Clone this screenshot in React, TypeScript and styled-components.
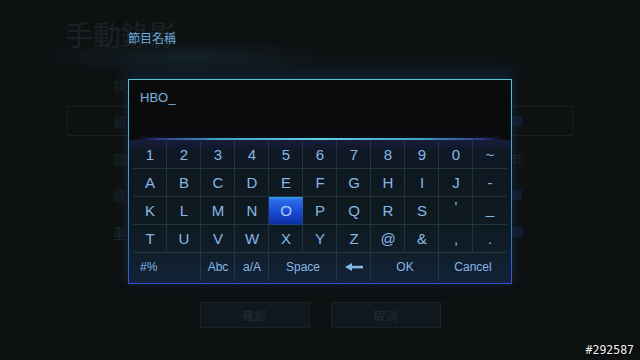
import React from "react";
import styled, { createGlobalStyle } from "styled-components";

const Global = createGlobalStyle`
  html, body { margin: 0; padding: 0; background: #0e1112; }
  * { box-sizing: border-box; }
`;

const Page = styled.div`
  position: relative;
  width: 640px;
  height: 360px;
  overflow: hidden;
  background:
    radial-gradient(ellipse 150px 16px at 190px 57px, rgba(28, 58, 78, 0.4), transparent),
    #0e1112;
  font-family: "Liberation Sans", "Noto Sans CJK TC", Arial, sans-serif;
`;

/* ---------- dimmed form behind the dialog ---------- */
const Form = styled.div`
  display: flex;
  flex-direction: column;
  padding: 18px 0 0 65px;
`;

const PageTitle = styled.div`
  display: flex;
  align-items: flex-end;
  gap: 6px;
  height: 32px;
  font-family: "Noto Sans CJK TC", sans-serif;
  font-size: 28px;
  line-height: 32px;
  color: #1b2224;
`;

const Dots = styled.span`
  font-size: 12px;
  line-height: 18px;
  letter-spacing: 6px;
  color: #182022;
`;

const Rows = styled.div`
  display: flex;
  flex-direction: column;
  gap: 7px;
  margin-top: 19px;
  margin-left: 2px;
  width: 506px;
`;

const Row = styled.div<{ $boxed?: boolean }>`
  display: flex;
  align-items: center;
  justify-content: space-between;
  height: 30px;
  padding: 0 50px 0 45px;
  border: 1px solid ${(p) => (p.$boxed ? "#1a2022" : "transparent")};
`;

const RowLabel = styled.span`
  font-family: "Noto Sans CJK TC", sans-serif;
  font-size: 13px;
  color: #1d2426;
`;

const RowField = styled.span`
  display: block;
  width: 60px;
  height: 10px;
  background: #121d30;
`;

const RowText = styled.span`
  font-family: "Noto Sans CJK TC", sans-serif;
  font-size: 10px;
  color: #222a2c;
`;

const Buttons = styled.div`
  display: flex;
  justify-content: center;
  gap: 21px;
  margin-top: 55px;
  margin-left: -65px;
  width: 640px;
`;

const DimButton = styled.div`
  width: 110px;
  height: 26px;
  display: flex;
  align-items: center;
  justify-content: center;
  background: #11181d;
  border: 1px solid #192226;
  font-family: "Noto Sans CJK TC", sans-serif;
  font-size: 12px;
  color: #202c33;
`;

/* ---------- dialog ---------- */
const DialogWrap = styled.div`
  position: absolute;
  left: 128px;
  top: 30px;
  width: 384px;
  display: flex;
  flex-direction: column;
`;

const DialogTitle = styled.div`
  height: 16px;
  font-family: "Noto Sans CJK TC", sans-serif;
  font-size: 12px;
  line-height: 16px;
  color: #6aa9de;
  margin-bottom: 33px;
`;

const Box = styled.div`
  display: flex;
  flex-direction: column;
  height: 205px;
  border: 1px solid;
  border-image: linear-gradient(180deg, #56c3cf 0%, #45a2c6 40%, #3552cc 100%) 1;
  background: #0a0b0c;
  box-shadow: 0 -8px 14px 2px rgba(20, 44, 66, 0.55), 0 0 6px rgba(30, 60, 90, 0.4);
`;

const InputArea = styled.div`
  height: 58px;
  padding: 10px 11px 0;
  font-size: 13px;
  line-height: 16px;
  color: #80b2de;
`;

const Separator = styled.div`
  height: 2px;
  margin: 0 8px;
  background: linear-gradient(
    90deg,
    rgba(70, 60, 180, 0) 0%,
    rgba(70, 70, 190, 0.7) 6%,
    #3f9fc0 22%,
    #62d2de 50%,
    #3f9fc0 78%,
    rgba(70, 70, 190, 0.7) 94%,
    rgba(70, 60, 180, 0) 100%
  );
  box-shadow: 0 2px 6px rgba(70, 80, 210, 0.55);
`;

const Keyboard = styled.div`
  display: grid;
  grid-template-columns: repeat(11, 34px);
  grid-auto-rows: 28px;
  padding: 1px 4px 2px;
  height: 143px;
  background: linear-gradient(
    180deg,
    #171c3a 0px,
    #0f1824 12px,
    #0e181e 40%,
    #0f1c25 70%,
    #122238 100%
  );
`;

const Key = styled.div<{
  $span?: number;
  $selected?: boolean;
  $small?: boolean;
  $left?: boolean;
  $noRight?: boolean;
  $noBottom?: boolean;
  $dy?: number;
}>`
  grid-column: span ${(p) => p.$span ?? 1};
  display: flex;
  align-items: center;
  justify-content: ${(p) => (p.$left ? "flex-start" : "center")};
  padding-left: ${(p) => (p.$left ? "7px" : "0")};
  font-size: ${(p) => (p.$small ? "12px" : "15px")};
  line-height: 28px;
  color: ${(p) => (p.$selected ? "#a9cbf4" : "#86b8e6")};
  box-shadow: ${(p) =>
    `inset ${p.$noRight ? "0" : "-1px"} ${p.$noBottom ? "0" : "-1px"} 0 rgba(52, 98, 100, 0.4)`};
  background: ${(p) =>
    p.$selected
      ? "linear-gradient(180deg, #3aa0f0 0px, #2a6ee8 3px, #1a4cd6 50%, #0b2ca2 100%)"
      : "transparent"};
  & > span {
    position: relative;
    top: ${(p) => p.$dy ?? 0}px;
  }
`;

const Watermark = styled.div`
  position: absolute;
  right: 6px;
  bottom: 3px;
  font-family: "DejaVu Sans Mono", monospace;
  font-size: 11.5px;
  line-height: 14px;
  color: #f2f2f2;
  text-shadow: 0 0 2px #000, 1px 1px 1px #000;
`;

const Arrow = () => (
  <svg width="18" height="8" viewBox="0 0 18 8">
    <polygon points="0,4 7,0 7,8" fill="#86b8e6" />
    <rect x="6" y="2.8" width="12" height="2.6" fill="#86b8e6" />
  </svg>
);

type K = { t: string; dy?: number; sel?: boolean };
const rows: K[][] = [
  ["1", "2", "3", "4", "5", "6", "7", "8", "9", "0"].map((t) => ({ t })).concat([{ t: "~" }]),
  ["A", "B", "C", "D", "E", "F", "G", "H", "I", "J"].map((t) => ({ t })).concat([{ t: "-" }]),
  [
    { t: "K" }, { t: "L" }, { t: "M" }, { t: "N" }, { t: "O", sel: true },
    { t: "P" }, { t: "Q" }, { t: "R" }, { t: "S" }, { t: "'", dy: -4 }, { t: "_", dy: -2 },
  ],
  [
    { t: "T" }, { t: "U" }, { t: "V" }, { t: "W" }, { t: "X" }, { t: "Y" },
    { t: "Z" }, { t: "@" }, { t: "&" }, { t: "," }, { t: "." },
  ],
];

export default function App() {
  return (
    <Page>
      <Global />
      <Form>
        <PageTitle>
          手動錄影<Dots>......</Dots>
        </PageTitle>
        <Rows>
          <Row>
            <RowLabel>頻道</RowLabel>
            <span />
          </Row>
          <Row $boxed>
            <RowLabel>節目</RowLabel>
            <RowField />
          </Row>
          <Row>
            <RowLabel>開始</RowLabel>
            <RowText>日</RowText>
          </Row>
          <Row>
            <RowLabel>錄影</RowLabel>
            <RowField />
          </Row>
          <Row>
            <RowLabel>重複</RowLabel>
            <RowField />
          </Row>
        </Rows>
        <Buttons>
          <DimButton>確認</DimButton>
          <DimButton>取消</DimButton>
        </Buttons>
      </Form>

      <DialogWrap>
        <DialogTitle>節目名稱</DialogTitle>
        <Box>
          <InputArea>HBO_</InputArea>
          <Separator />
          <Keyboard>
            {rows.map((r, ri) =>
              r.map((k, ci) => (
                <Key key={`${ri}-${ci}`} $selected={k.sel} $dy={k.dy} $noRight={ci === 10}>
                  <span>{k.t}</span>
                </Key>
              ))
            )}
            <Key $span={2} $small $left $noBottom>
              <span>#%</span>
            </Key>
            <Key $small $noBottom>
              <span>Abc</span>
            </Key>
            <Key $small $noBottom>
              <span>a/A</span>
            </Key>
            <Key $span={2} $small $noBottom>
              <span>Space</span>
            </Key>
            <Key $small $noBottom>
              <Arrow />
            </Key>
            <Key $span={2} $small $noBottom>
              <span>OK</span>
            </Key>
            <Key $span={2} $small $noBottom $noRight>
              <span>Cancel</span>
            </Key>
          </Keyboard>
        </Box>
      </DialogWrap>

      <Watermark>#292587</Watermark>
    </Page>
  );
}
